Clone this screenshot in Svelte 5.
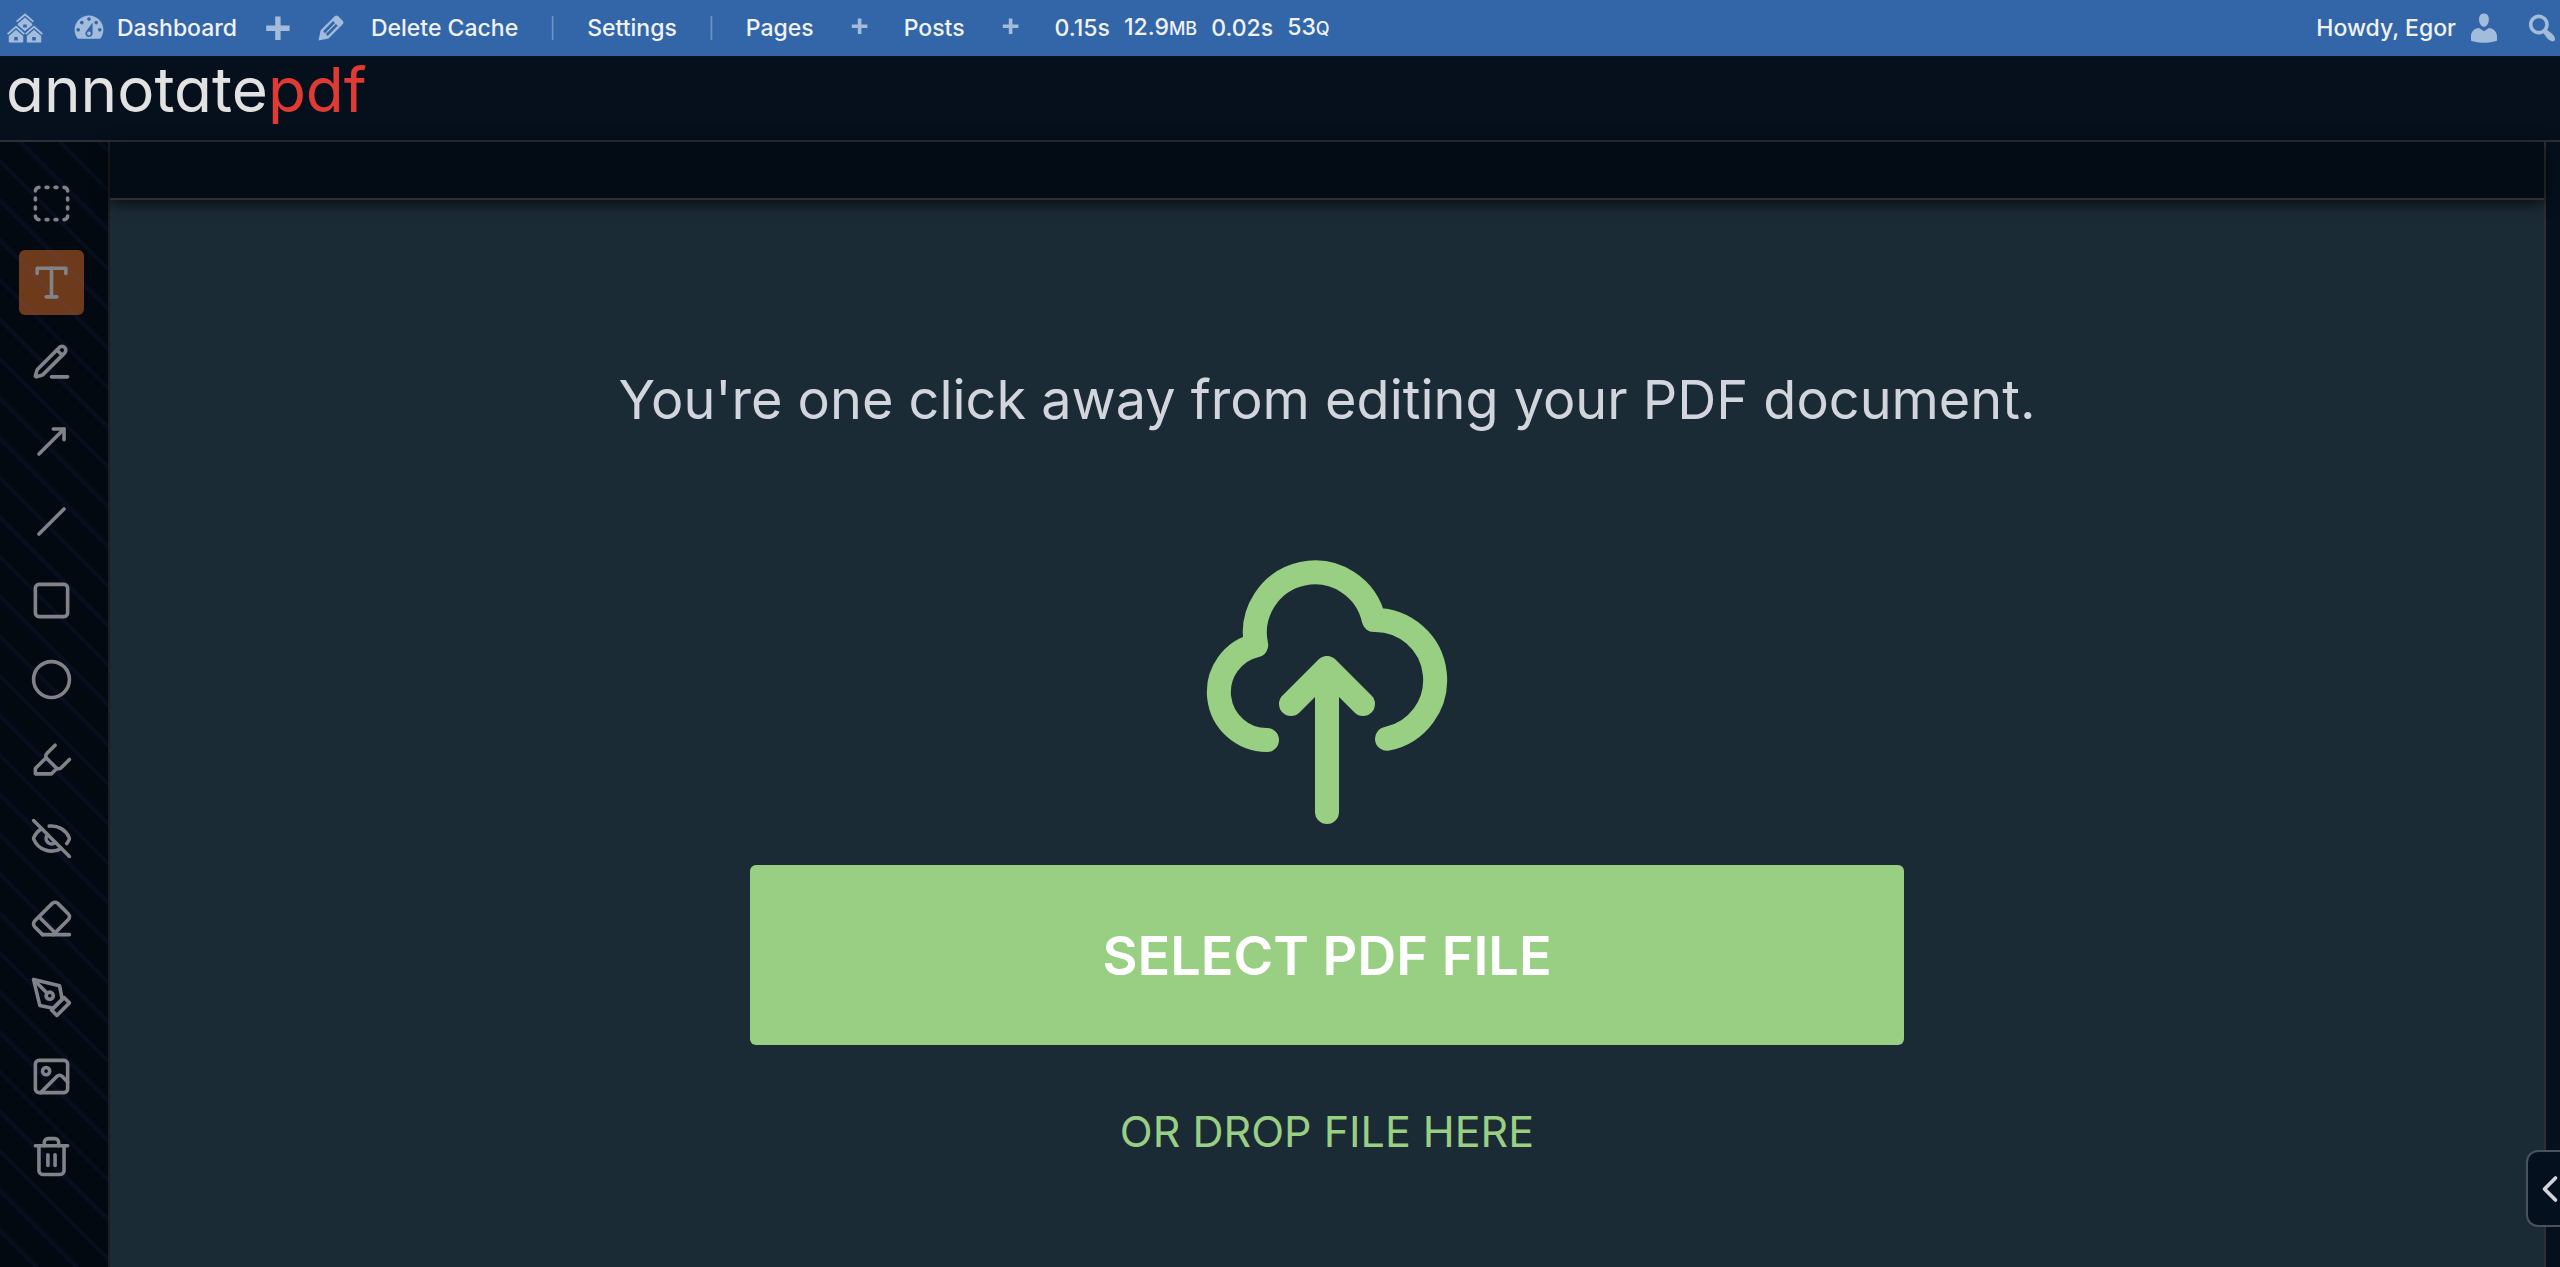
<script lang="ts">
  type Tool = {
    id: string;
    label: string;
    paths: string[];
  };

  // 24x24 stroke icons
  const tools: Tool[] = [
    {
      id: 'select',
      label: 'Select',
      paths: [
        'M5 3a2 2 0 0 0-2 2', 'M19 3a2 2 0 0 1 2 2', 'M21 19a2 2 0 0 1-2 2', 'M5 21a2 2 0 0 1-2-2',
        'M9 3h1', 'M9 21h1', 'M14 3h1', 'M14 21h1', 'M3 9v1', 'M21 9v1', 'M3 14v1', 'M21 14v1',
      ],
    },
    { id: 'text', label: 'Text', paths: ['M4 7V4h16v3', 'M9 20h6', 'M12 4v16'] },
    {
      id: 'pencil',
      label: 'Pencil',
      paths: [
        'M12 20h9',
        'M16.376 3.622a1 1 0 0 1 3.002 3.002L7.368 18.635a2 2 0 0 1-.855.506l-2.872.838a.5.5 0 0 1-.62-.62l.838-2.872a2 2 0 0 1 .506-.854z',
        'm15 5 3 3',
      ],
    },
    { id: 'arrow', label: 'Arrow', paths: ['M13 5h6v6', 'M19 5 5 19'] },
    { id: 'line', label: 'Line', paths: ['M19 5 5 19'] },
    { id: 'rect', label: 'Rectangle', paths: ['M5 3h14a2 2 0 0 1 2 2v14a2 2 0 0 1-2 2H5a2 2 0 0 1-2-2V5a2 2 0 0 1 2-2z'] },
    { id: 'circle', label: 'Circle', paths: ['M12 2a10 10 0 1 0 0 20 10 10 0 1 0 0-20z'] },
    {
      id: 'highlight',
      label: 'Highlight',
      paths: ['m9 11-6 6v3h9l3-3', 'm22 12-4.6 4.6a2 2 0 0 1-2.8 0l-5.2-5.2a2 2 0 0 1 0-2.8L14 4'],
    },
    {
      id: 'redact',
      label: 'Redact',
      paths: [
        'M10.733 5.076a10.744 10.744 0 0 1 11.205 6.575 1 1 0 0 1 0 .696 10.747 10.747 0 0 1-1.444 2.49',
        'M14.084 14.158a3 3 0 0 1-4.242-4.242',
        'M17.479 17.499a10.75 10.75 0 0 1-15.417-5.151 1 1 0 0 1 0-.696 10.75 10.75 0 0 1 4.446-5.143',
        'm2 2 20 20',
      ],
    },
    {
      id: 'eraser',
      label: 'Eraser',
      paths: [
        'm7 21-4.3-4.3c-1-1-1-2.5 0-3.4l9.6-9.6c1-1 2.5-1 3.4 0l5.6 5.6c1 1 1 2.5 0 3.4L13 21',
        'M22 21H7',
        'm5 11 9 9',
      ],
    },
    {
      id: 'pen',
      label: 'Signature',
      paths: [
        'm12 19 7-7 3 3-7 7-3-3z',
        'm18 13-1.5-7.5L2 2l3.5 14.5L13 18l5-5z',
        'm2 2 7.586 7.586',
        'M11 9a2 2 0 1 0 0 4 2 2 0 1 0 0-4z',
      ],
    },
    {
      id: 'image',
      label: 'Image',
      paths: [
        'M5 3h14a2 2 0 0 1 2 2v14a2 2 0 0 1-2 2H5a2 2 0 0 1-2-2V5a2 2 0 0 1 2-2z',
        'M9 7a2 2 0 1 0 0 4 2 2 0 1 0 0-4z',
        'm21 15-3.086-3.086a2 2 0 0 0-2.828 0L6 21',
      ],
    },
    {
      id: 'trash',
      label: 'Delete',
      paths: [
        'M3 6h18',
        'M19 6v14c0 1-1 2-2 2H7c-1 0-2-1-2-2V6',
        'M8 6V4c0-1 1-2 2-2h4c1 0 2 1 2 2v2',
        'M10 11v6',
        'M14 11v6',
      ],
    },
  ];

  // 20x20 filled icons of the admin bar
  const glyphs = {
    sites: 'M14.27 6.87L10 3.14 5.73 6.87 5 6.14l5-4.38 5 4.38zM14 8.42l-4.05 3.43L6 8.38v-.74l4-3.5 4 3.5v.78zM11 9.7V8H9v1.7h2zm-1.73 4.03L5 10 .73 13.73 0 13l5-4.38L10 13zm10 0L15 10l-4.27 3.73L10 13l5-4.38L20 13zM5 11l4 3.5V18H1v-3.5zm10 0l4 3.5V18h-8v-3.5zm-9 6v-2H4v2h2zm10 0v-2h-2v2h2z',
    gauge: 'M3.76 16h12.48c1.1-1.37 1.76-3.11 1.76-5 0-4.42-3.58-8-8-8s-8 3.58-8 8c0 1.89.66 3.63 1.76 5zM10 4c.55 0 1 .45 1 1s-.45 1-1 1-1-.45-1-1 .45-1 1-1zM6 6c.55 0 1 .45 1 1s-.45 1-1 1-1-.45-1-1 .45-1 1-1zm8 0c.55 0 1 .45 1 1s-.45 1-1 1-1-.45-1-1 .45-1 1-1zm-5.37 5.55L12 7v6c0 1.1-.9 2-2 2s-2-.9-2-2c0-.57.24-1.08.63-1.45zM4 10c.55 0 1 .45 1 1s-.45 1-1 1-1-.45-1-1 .45-1 1-1zm12 0c.55 0 1 .45 1 1s-.45 1-1 1-1-.45-1-1 .45-1 1-1zm-5 3c0-.55-.45-1-1-1s-1 .45-1 1 .45 1 1 1 1-.45 1-1z',
    plus: 'M17 7v3h-5v5H9v-5H4V7h5V2h3v5h5z',
    edit: 'M13.89 3.39l2.71 2.72c.46.46.42 1.24.03 1.64l-8.01 8.02-5.56 1.16 1.16-5.58s7.6-7.63 7.99-8.03c.39-.39 1.22-.39 1.68.07zm-2.73 2.79l-5.59 5.61 1.11 1.11 5.54-5.65zm-2.97 8.23l5.58-5.6-1.07-1.08-5.59 5.6z',
    user: 'M10 9.25c-2.27 0-2.73-3.44-2.73-3.44C7 4.02 7.82 2 9.97 2c2.16 0 2.98 2.02 2.71 3.81 0 0-.41 3.44-2.68 3.44zm0 2.57L12.72 10c2.39 0 4.52 2.33 4.52 4.53v2.49s-3.65 1.13-7.24 1.13c-3.65 0-7.24-1.13-7.24-1.13v-2.49c0-2.25 1.94-4.48 4.47-4.48z',
    search: 'M12.14 4.18c1.87 1.87 2.11 4.75.72 6.89.12.1.22.21.36.31.2.16.47.36.81.59.34.24.56.39.66.47.42.31.73.57.94.78.32.32.6.65.84 1 .25.35.44.69.59 1.04.14.35.21.68.18 1-.02.32-.14.59-.36.81s-.49.34-.81.36c-.31.02-.65-.04-.99-.19-.35-.14-.7-.34-1.04-.59-.35-.24-.68-.52-1-.84-.21-.21-.47-.52-.77-.93-.1-.13-.25-.35-.47-.66-.22-.32-.4-.57-.56-.78-.16-.2-.29-.35-.44-.5-2.07 1.09-4.69.76-6.44-.98-2.14-2.15-2.14-5.64 0-7.78 2.15-2.15 5.63-2.15 7.78 0zm-1.41 6.36c1.36-1.37 1.36-3.58 0-4.95-1.37-1.37-3.59-1.37-4.95 0-1.37 1.37-1.37 3.58 0 4.95 1.36 1.37 3.58 1.37 4.95 0z',
  };

  let active = $state('text');
</script>

{#snippet glyph(d: string)}
  <svg class="glyph" viewBox="0 0 20 20" aria-hidden="true"><path {d} /></svg>
{/snippet}

<div class="page">
  <nav class="adminbar" aria-label="Toolbar">
    <a class="item sites" href="#sites" aria-label="My Sites">{@render glyph(glyphs.sites)}</a>
    <a class="item dashboard" href="#dashboard">{@render glyph(glyphs.gauge)}Dashboard</a>
    <a class="item new" href="#new" aria-label="New">{@render glyph(glyphs.plus)}</a>
    <a class="item edit" href="#edit" aria-label="Edit">{@render glyph(glyphs.edit)}</a>
    <a class="item" href="#cache">Delete Cache</a>
    <span class="sep">|</span>
    <a class="item" href="#settings">Settings</a>
    <span class="sep">|</span>
    <a class="item" href="#pages">Pages</a>
    <a class="add" href="#new-page" aria-label="Add page">{@render glyph(glyphs.plus)}</a>
    <a class="item" href="#posts">Posts</a>
    <a class="add" href="#new-post" aria-label="Add post">{@render glyph(glyphs.plus)}</a>
    <a class="item stats" href="#stats">
      <span>0.15s</span>
      <span>12.9<small>MB</small></span>
      <span>0.02s</span>
      <span>53<small>Q</small></span>
    </a>
    <a class="item account" href="#profile">Howdy, Egor{@render glyph(glyphs.user)}</a>
    <button class="search" aria-label="Search">{@render glyph(glyphs.search)}</button>
  </nav>

  <header class="header">
    <a class="logo" href="#home">annotate<span>pdf</span></a>
  </header>

  <div class="workspace">
    <aside class="tools">
      {#each tools as tool (tool.id)}
        <button
          class="tool"
          class:active={active === tool.id}
          aria-label={tool.label}
          aria-pressed={active === tool.id}
          onclick={() => (active = tool.id)}
        >
          <svg viewBox="0 0 24 24" aria-hidden="true">
            {#each tool.paths as d}
              <path {d} />
            {/each}
          </svg>
        </button>
      {/each}
    </aside>

    <div class="editor">
      <div class="options"></div>
      <main class="drop">
        <h1>You're one click away from editing your PDF document.</h1>
        <svg class="cloud" viewBox="-10 -9 20 22" aria-hidden="true">
          <path d="M-5 6A4 4 0 0 1-5.9-1.9A5 5 0 1 1 3.9-4A5 5 0 0 1 5 5.9" />
          <path d="M0 12V0M-3 3L0 0L3 3" />
        </svg>
        <button class="select-file">SELECT PDF FILE</button>
        <p>OR DROP FILE HERE</p>
      </main>
    </div>

    <aside class="side">
      <button class="toggle" aria-label="Open panel">
        <svg viewBox="0 0 24 24" aria-hidden="true"><path d="m15 18-6-6 6-6" /></svg>
      </button>
    </aside>
  </div>
</div>

<style>
  :global(body) {
    background-color: #05101c;
  }

  .page {
    display: flex;
    flex-direction: column;
    min-height: 100vh;
    overflow: hidden;
    font-family: Inter, "Liberation Sans", sans-serif;
    color: #d3d5dd;
  }

  a {
    color: inherit;
    text-decoration: none;
  }

  button {
    font-family: inherit;
    border: none;
    padding: 0;
    background: none;
    cursor: pointer;
  }

  .adminbar {
    display: flex;
    align-items: center;
    height: 56px;
    background-color: #3266a8;
    color: #f0f2f6;
    font-size: 23px;
    font-weight: 500;
    line-height: 36px;
    white-space: nowrap;
  }

  .glyph {
    display: block;
    flex: none;
    width: 36px;
    height: 36px;
    fill: #a4bcdb;
  }

  .item {
    display: flex;
    align-items: center;
  }

  .sites {
    padding: 0 28px 0 7px;
  }

  .dashboard {
    gap: 10px;
    padding-right: 22px;
  }

  .new {
    padding-top: 6px;
  }

  .edit {
    padding: 0 22px 0 18px;
  }

  .sep {
    width: 69px;
    text-align: center;
    font-size: 20px;
    font-weight: 400;
    color: #6d94c6;
  }

  .add {
    display: flex;
    justify-content: center;
    width: 90px;
  }

  .add .glyph {
    width: 24px;
    height: 24px;
  }

  .stats {
    gap: 14px;
  }

  .stats small {
    font-size: 18px;
  }

  .account {
    gap: 10px;
    margin-left: auto;
  }

  .search {
    margin-left: 22px;
  }

  .header {
    display: flex;
    align-items: flex-start;
    box-sizing: border-box;
    height: 86px;
    padding-left: 6px;
    border-bottom: 2px solid #2e2f32;
    background-color: #05101c;
  }

  /* cv11 is the round single-storey a */
  .logo {
    font-size: 62px;
    font-weight: 400;
    font-feature-settings: "cv11";
    line-height: 68px;
    color: #e2e2e2;
  }

  .logo span {
    color: #df3a33;
  }

  .workspace {
    flex: 1;
    display: flex;
  }

  .tools {
    position: relative;
    display: flex;
    flex-direction: column;
    justify-content: space-between;
    box-sizing: border-box;
    width: 110px;
    padding: 29px 0 78px 19px;
    border-right: 2px solid #1f1f23;
    background-color: #020911;
  }

  .tools::after {
    content: "";
    position: absolute;
    inset: 0;
    pointer-events: none;
    background: repeating-linear-gradient(45deg, transparent 0 24px, rgba(100, 90, 240, 0.06) 24px 28px);
  }

  .tool {
    display: flex;
    align-items: center;
    justify-content: center;
    width: 65px;
    height: 65px;
    border-radius: 6px;
    color: #828389;
  }

  .tool.active {
    background-color: #6d3a1b;
  }

  .tool svg {
    width: 43px;
    height: 43px;
    stroke-width: 2;
  }

  .tool svg,
  .toggle svg,
  .cloud {
    fill: none;
    stroke: currentColor;
    stroke-linecap: round;
    stroke-linejoin: round;
  }

  .editor {
    flex: 1;
    display: flex;
    flex-direction: column;
  }

  .options {
    z-index: 1;
    height: 56px;
    border-bottom: 2px solid #2e2f32;
    background-color: #030c14;
    box-shadow: 0 4px 14px rgba(0, 0, 0, 0.7);
  }

  .drop {
    flex: 1;
    display: flex;
    flex-direction: column;
    align-items: center;
    padding-top: 166px;
    background-color: #1b2b36;
  }

  h1 {
    margin: 0 0 126px;
    font-size: 54px;
    font-weight: 400;
    line-height: 68px;
  }

  .cloud {
    width: 240px;
    height: 264px;
    margin-bottom: 41px;
    overflow: visible;
    color: #99cf82;
    stroke-width: 2;
  }

  .select-file {
    width: 1154px;
    max-width: 90%;
    height: 180px;
    border-radius: 6px;
    background-color: #99cf82;
    color: #fff;
    font-size: 54px;
    font-weight: 600;
  }

  .drop p {
    margin: 60px 0;
    font-size: 43px;
    line-height: 52px;
    color: #99cf82;
  }

  .side {
    position: relative;
    width: 14px;
    border-left: 2px solid #2e2f32;
    background-color: #05101c;
  }

  .toggle {
    position: absolute;
    z-index: 2;
    right: 0;
    bottom: 40px;
    box-sizing: border-box;
    width: 34px;
    height: 77px;
    border: 2px solid #4a515e;
    border-right: none;
    border-radius: 12px 0 0 12px;
    background-color: #05101e;
    color: #d3d5dd;
    overflow: hidden;
  }

  .toggle svg {
    display: block;
    width: 44px;
    height: 44px;
    stroke-width: 2;
  }
</style>
